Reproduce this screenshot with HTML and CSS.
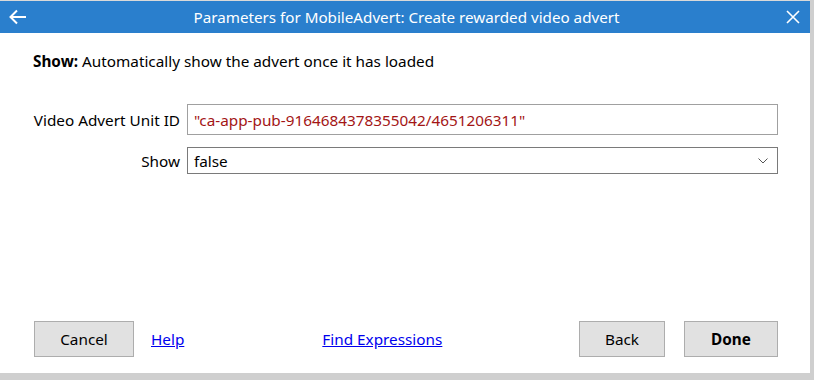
FILE: index.html
```html
<!DOCTYPE html>
<html lang="en">
<head>
    <meta charset="UTF-8">
    <title>Parameters for MobileAdvert</title>
    <link rel="stylesheet" href="styles.css">
</head>
<body>
    <div class="dialog">
        <!-- Title bar -->
        <div class="titlebar">
            <svg class="back" width="18" height="16" viewBox="0 0 18 16">
                <path d="M1.5 8 H17 M8 1.5 L1.5 8 L8 14.5" fill="none" stroke="#fff" stroke-width="2"/>
            </svg>
            <div class="title">Parameters for MobileAdvert: Create rewarded video advert</div>
            <svg class="close" width="14" height="14" viewBox="0 0 14 14">
                <path d="M1 1 L13 13 M13 1 L1 13" fill="none" stroke="#fff" stroke-width="1.6"/>
            </svg>
        </div>

        <div class="content">
            <p class="desc"><b>Show:</b> Automatically show the advert once it has loaded</p>

            <div class="form">
                <label class="label">Video Advert Unit ID</label>
                <div class="input text-input">"ca-app-pub-9164684378355042/4651206311"</div>

                <label class="label">Show</label>
                <div class="input select">
                    <span>false</span>
                    <svg width="10" height="6" viewBox="0 0 10 6">
                        <path d="M0.5 0.5 L5 5 L9.5 0.5" fill="none" stroke="#555" stroke-width="1"/>
                    </svg>
                </div>
            </div>
        </div>

        <div class="footer">
            <button class="btn cancel">Cancel</button>
            <a href="#" class="link help">Help</a>
            <a href="#" class="link find">Find Expressions</a>
            <div class="spacer"></div>
            <button class="btn back-btn">Back</button>
            <button class="btn done">Done</button>
        </div>
    </div>
</body>
</html>
```

FILE: styles.css
```css
body {
    margin: 0;
    background-color: #cfcfcf;
    font-family: "Noto Sans", "Open Sans", sans-serif;
    font-size: 15.3px;
    color: #000;
}

.dialog {
    width: 810px;
    height: 373px;
    background-color: #fff;
    display: flex;
    flex-direction: column;
}

.titlebar {
    height: 33px;
    background-color: #2a7fcd;
    color: #fff;
    display: flex;
    align-items: center;
    padding: 0 10px 0 9px;
    border-top: 1px solid #d9d9d9;
    box-sizing: border-box;
}

.title {
    flex: 1;
    text-align: center;
    font-size: 15.2px;
}

.content {
    padding: 0 32px 0 33px;
    flex: 1;
}

.desc {
    margin: 18px 0 0;
    line-height: 20px;
}

.form {
    display: grid;
    grid-template-columns: 147px 1fr;
    column-gap: 7px;
    row-gap: 12px;
    margin-top: 33px;
    align-items: center;
}

.label {
    text-align: right;
}

.input {
    border: 1px solid #a0a0a0;
    box-sizing: border-box;
    padding: 0 6px;
    display: flex;
    align-items: center;
}

.text-input {
    height: 31px;
    color: #a31515;
}

.select {
    height: 27px;
    border-color: #7a7a7a;
    justify-content: space-between;
    padding-right: 9px;
}

.footer {
    display: flex;
    align-items: center;
    padding: 0 32px 16px 34px;
}

.btn {
    height: 36px;
    background-color: #e1e1e1;
    border: 1px solid #adadad;
    font-family: inherit;
    font-size: 15.3px;
    color: #000;
    padding: 0;
}

.cancel {
    width: 100px;
}

.back-btn {
    width: 86px;
}

.done {
    width: 94px;
    margin-left: 19px;
    font-weight: bold;
}

.link {
    color: #0000ee;
    text-decoration: underline;
}

.help {
    margin-left: 17px;
}

.find {
    margin-left: 138px;
}

.spacer {
    flex: 1;
}
```
